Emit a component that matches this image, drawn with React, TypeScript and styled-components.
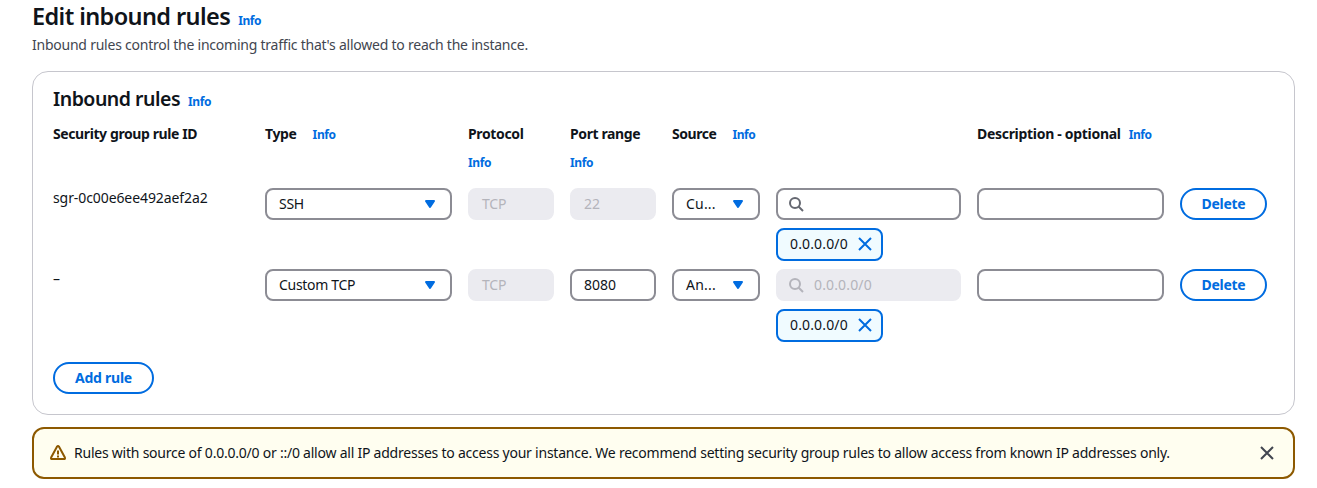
import React from "react";
import styled, { createGlobalStyle } from "styled-components";

const blue = "#006ce0";
const ink = "#0f141a";

const GlobalStyle = createGlobalStyle`
  * { box-sizing: border-box; }
  body {
    margin: 0;
    background: #fff;
    color: ${ink};
    font: 400 14px/20px "Noto Sans", "Open Sans", sans-serif;
  }
`;

const Text = styled.span<{ $track?: number }>`
  letter-spacing: ${(p) => p.$track ?? 0}px;
  white-space: nowrap;
`;

const Page = styled.main`
  width: 1317px;
  height: 488px;
  padding: 1px 22px 0 32px;
  overflow: hidden;
`;

const TitleLine = styled.div`
  display: flex;
  align-items: baseline;
  gap: 8px;
`;

const PageTitle = styled.h1<{ $track: number }>`
  margin: 0;
  font-size: 23.5px;
  line-height: 30px;
  font-weight: 600;
  font-stretch: 87.5%;
  letter-spacing: ${(p) => p.$track}px;
`;

const CardTitle = styled.h2<{ $track: number }>`
  margin: 0;
  font-size: 19.5px;
  line-height: 24px;
  font-weight: 600;
  font-stretch: 87.5%;
  letter-spacing: ${(p) => p.$track}px;
`;

const Info = styled.a`
  color: ${blue};
  font-size: 12px;
  line-height: 20px;
  font-weight: 700;
  letter-spacing: -0.4px;
`;

const Lead = styled.p`
  margin: 4px 0 16px;
  color: #424650;
`;

const Card = styled.section`
  width: 1263px;
  height: 344px;
  padding: 15px 20px 0;
  border: 1px solid #c6c6cd;
  border-radius: 16px;
`;

const Grid = styled.div`
  display: grid;
  grid-template-columns: 196px 187px 86px 86px 88px 185px 187px 87px;
  column-gap: 16px;
  align-items: start;
`;

const HeaderGrid = styled(Grid)`
  height: 64px;
  margin-top: 12px;
`;

const RuleGrid = styled(Grid)`
  height: 81px;
`;

const Heading = styled.div<{ $gap?: number; $stacked?: boolean }>`
  display: flex;
  flex-direction: ${(p) => (p.$stacked ? "column" : "row")};
  gap: ${(p) => p.$gap ?? 8}px;
  font-weight: 700;

  ${Info} {
    padding-top: 1px;
  }
`;

const RuleId = styled.div`
  line-height: 20px;
`;

const Field = styled.div<{ $disabled?: boolean }>`
  display: flex;
  align-items: center;
  height: 32px;
  padding: 0 12px;
  border: 2px solid ${(p) => (p.$disabled ? "#ebebf0" : "#8c8c94")};
  border-radius: 8px;
  background: ${(p) => (p.$disabled ? "#ebebf0" : "#fff")};
  color: ${(p) => (p.$disabled ? "#b4b4bb" : ink)};
`;

const SelectField = styled(Field)`
  justify-content: space-between;
`;

const SearchField = styled(Field)`
  gap: 10px;
  padding-left: 10px;
`;

const SourceStack = styled.div`
  display: flex;
  flex-direction: column;
  align-items: stretch;
  gap: 8px;
`;

const Token = styled.div`
  display: flex;
  align-items: center;
  align-self: flex-start;
  justify-content: space-between;
  width: 107px;
  height: 33px;
  padding: 0 8px 1px 12px;
  border: 2px solid ${blue};
  border-radius: 8px;
  background: #f0fbff;
`;

const Button = styled.button<{ $width: number }>`
  width: ${(p) => p.$width}px;
  height: 32px;
  padding: 0;
  border: 2px solid ${blue};
  border-radius: 20px;
  background: #fff;
  color: ${blue};
  font: inherit;
  font-weight: 700;
`;

const Footer = styled.div`
  padding-top: 12px;
`;

const Alert = styled.div`
  display: flex;
  align-items: center;
  width: 1263px;
  height: 52px;
  margin-top: 12px;
  padding: 0 18px 0 16px;
  border: 2px solid #8d5900;
  border-radius: 12px;
  background: #fffef0;
`;

const AlertText = styled.div`
  flex: 1;
  padding-left: 8px;
`;

const Icon = styled.svg`
  display: block;
  flex: none;
  width: 16px;
  height: 16px;
  fill: none;
  stroke: currentColor;
  stroke-width: 2;
`;

const CloseIcon = styled(Icon)<{ $color: string }>`
  color: ${(p) => p.$color};
`;

const SearchGlyph = styled(Icon)<{ $disabled?: boolean }>`
  color: ${(p) => (p.$disabled ? "#b4b4bb" : "#656871")};
`;

const WarnIcon = styled(Icon)`
  color: #8d5900;
`;

const CaretIcon = styled(Icon)`
  fill: ${blue};
  stroke: ${blue};
`;

const Caret = () => (
  <CaretIcon viewBox="0 0 16 16">
    <path d="M4 5h8l-4 6z" strokeLinejoin="round" />
  </CaretIcon>
);

const Close = ({ color }: { color: string }) => (
  <CloseIcon viewBox="0 0 16 16" $color={color}>
    <path d="m2 2 12 12M14 2 2 14" />
  </CloseIcon>
);

const Search = ({ disabled }: { disabled?: boolean }) => (
  <SearchGlyph viewBox="0 0 16 16" $disabled={disabled}>
    <circle cx="7" cy="7" r="5" />
    <path d="m15 15-4.5-4.5" />
  </SearchGlyph>
);

const Warning = () => (
  <WarnIcon viewBox="0 0 16 16">
    <path d="M7.1 1.6a1 1 0 0 1 1.8 0l6 11a1 1 0 0 1-.9 1.5H2a1 1 0 0 1-.9-1.5z" strokeLinejoin="round" />
    <path d="M8 5.5v4M8 10.5v2" />
  </WarnIcon>
);

type Rule = {
  id: string;
  type: string;
  port: string;
  portLocked?: boolean;
  source: string;
  sourceLocked?: boolean;
};

const rules: Rule[] = [
  { id: "sgr-0c00e6ee492aef2a2", type: "SSH", port: "22", portLocked: true, source: "Cu..." },
  { id: "–", type: "Custom TCP", port: "8080", source: "An...", sourceLocked: true },
];

const RuleRow = ({ rule }: { rule: Rule }) => (
  <RuleGrid>
    <RuleId><Text $track={-0.09}>{rule.id}</Text></RuleId>
    <SelectField><Text $track={-0.3}>{rule.type}</Text><Caret /></SelectField>
    <Field $disabled><Text $track={-0.2}>TCP</Text></Field>
    <Field $disabled={rule.portLocked}><Text>{rule.port}</Text></Field>
    <SelectField><Text $track={0.2}>{rule.source}</Text><Caret /></SelectField>
    <SourceStack>
      <SearchField $disabled={rule.sourceLocked}>
        <Search disabled={rule.sourceLocked} />
        {rule.sourceLocked && <Text $track={0.15}>0.0.0.0/0</Text>}
      </SearchField>
      <Token><Text $track={0.15}>0.0.0.0/0</Text><Close color={blue} /></Token>
    </SourceStack>
    <Field />
    <Button $width={87}><Text $track={-0.3}>Delete</Text></Button>
  </RuleGrid>
);

export default function App() {
  return (
    <Page>
      <GlobalStyle />
      <TitleLine>
        <PageTitle $track={-0.6}>Edit inbound rules</PageTitle>
        <Info>Info</Info>
      </TitleLine>
      <Lead>
        <Text $track={-0.235}>Inbound rules control the incoming traffic that's allowed to reach the instance.</Text>
      </Lead>
      <Card>
        <TitleLine>
          <CardTitle $track={-0.5}>Inbound rules</CardTitle>
          <Info>Info</Info>
        </TitleLine>
        <HeaderGrid>
          <Heading><Text $track={-0.4}>Security group rule ID</Text></Heading>
          <Heading $gap={16}><Text $track={-0.35}>Type</Text><Info>Info</Info></Heading>
          <Heading $stacked><Text $track={-0.35}>Protocol</Text><Info>Info</Info></Heading>
          <Heading $stacked><Text $track={-0.4}>Port range</Text><Info>Info</Info></Heading>
          <Heading $gap={16}><Text $track={-0.45}>Source</Text><Info>Info</Info></Heading>
          <span />
          <Heading><Text $track={-0.3}>Description - optional</Text><Info>Info</Info></Heading>
        </HeaderGrid>
        {rules.map((rule) => <RuleRow key={rule.id} rule={rule} />)}
        <Footer><Button $width={101}><Text $track={-0.25}>Add rule</Text></Button></Footer>
      </Card>
      <Alert>
        <Warning />
        <AlertText>
          <Text $track={-0.23}>
            Rules with source of 0.0.0.0/0 or ::/0 allow all IP addresses to access your instance. We recommend setting security group rules to allow access from known IP addresses only.
          </Text>
        </AlertText>
        <Close color="#424650" />
      </Alert>
    </Page>
  );
}
